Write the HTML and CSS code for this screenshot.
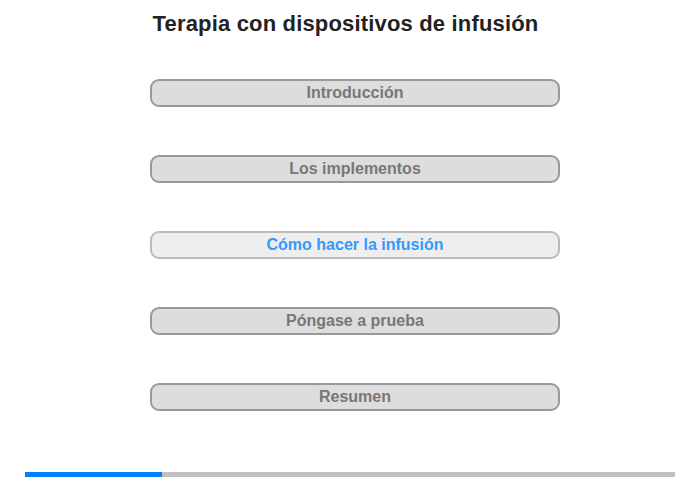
FILE: index.html
```html
<!DOCTYPE html>
<html lang="es">
<head>
  <meta charset="UTF-8" />
  <title>Terapia con dispositivos de infusión</title>
  <link rel="stylesheet" href="styles.css">
</head>
<body>
  <div class="page">
    <h1>Terapia con dispositivos de infusión</h1>

    <div class="menu">
      <button class="item">Introducción</button>
      <button class="item">Los implementos</button>
      <button class="item active">Cómo hacer la infusión</button>
      <button class="item">Póngase a prueba</button>
      <button class="item">Resumen</button>
    </div>

    <div class="progress">
      <div class="progress-fill" style="width: 21%"></div>
    </div>
  </div>
</body>
</html>
```
FILE: styles.css
```css
body {
  font-family: "Liberation Sans", Arial, sans-serif;
  background-color: #ffffff;
  margin: 0;
  padding: 0;
}
.page {
  width: 700px;
  height: 480px;
  display: flex;
  flex-direction: column;
}
h1 {
  font-size: 22px;
  font-weight: bold;
  letter-spacing: 0.17px;
  color: #222222;
  text-align: center;
  margin: 11px 9px 0 0;
  line-height: 25px;
}
.menu {
  display: flex;
  flex-direction: column;
  gap: 48px;
  margin: 43px 0 0 150px;
  width: 410px;
}
.item {
  height: 28px;
  background-color: #dddddd;
  border: 2px solid #999999;
  border-radius: 9px;
  color: #777777;
  font-family: "Liberation Sans", Arial, sans-serif;
  font-size: 16px;
  font-weight: bold;
  padding: 0;
  cursor: pointer;
}
.item.active {
  background-color: #eeeeee;
  border-color: #bbbbbb;
  color: #3399ff;
}
.progress {
  margin: 61px 0 0 25px;
  width: 650px;
  height: 5px;
  background-color: #c0c0c0;
}
.progress-fill {
  height: 100%;
  background-color: #0080ff;
}
```
